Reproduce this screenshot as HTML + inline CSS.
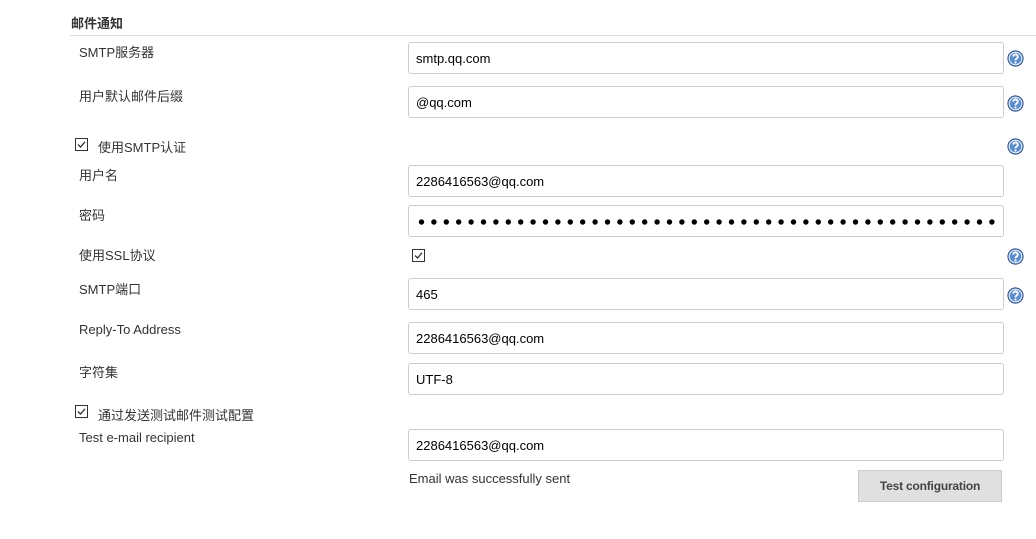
<!DOCTYPE html>
<html><head><meta charset="utf-8"><style>
body{margin:0;width:1036px;height:539px;background:#fff;position:relative;overflow:hidden;font-family:"Liberation Sans","Noto Sans CJK SC",sans-serif;font-size:13px;color:#333}
.a{position:absolute}
.lbl{position:absolute;left:79px;font-size:13px;color:#333}
.in{position:absolute;left:408px;width:596px;height:32px;border:1px solid #ccc;border-radius:3px;box-sizing:border-box;padding-left:7px;line-height:31px;font-size:13px;color:#000}
.h{position:absolute;left:1007px;width:17px;height:17px}
.cb{position:absolute;width:13px;height:13px}
</style></head><body>
<div class="a" style="left:71px;top:13px;font-weight:bold;font-size:13px;color:#333">邮件通知</div>
<div class="a" style="left:70px;top:35px;width:966px;height:1px;background:#ddd"></div>

<div class="lbl" style="top:42px">SMTP服务器</div>
<div class="in" style="top:42px">smtp.qq.com</div>
<div class="lbl" style="top:86px">用户默认邮件后缀</div>
<div class="in" style="top:86px">@qq.com</div>

<svg class="cb" style="left:75px;top:138px" viewBox="0 0 13 13"><use href="#c"/></svg>
<div class="lbl" style="left:98px;top:137px">使用SMTP认证</div>

<div class="lbl" style="top:165px">用户名</div>
<div class="in" style="top:165px">2286416563@qq.com</div>
<div class="lbl" style="top:205px">密码</div>
<div class="in" style="top:205px;padding:0">
<svg width="596" height="32" style="position:absolute;left:0;top:0"><g fill="#000" id="d"></g></svg></div>
<div class="lbl" style="top:245px">使用SSL协议</div>
<svg class="cb" style="left:412px;top:249px" viewBox="0 0 13 13"><use href="#c"/></svg>
<div class="lbl" style="top:279px">SMTP端口</div>
<div class="in" style="top:278px">465</div>
<div class="lbl" style="top:322px">Reply-To Address</div>
<div class="in" style="top:322px">2286416563@qq.com</div>
<div class="lbl" style="top:362px">字符集</div>
<div class="in" style="top:363px">UTF-8</div>

<svg class="cb" style="left:75px;top:405px" viewBox="0 0 13 13"><defs><g id="c"><rect x="0.5" y="0.5" width="12" height="12" fill="#fff" stroke="#333"/><path d="M3 6.5l2.5 2.5L10 3.8" fill="none" stroke="#333" stroke-width="1.3"/></g></defs><use href="#c"/></svg>
<div class="lbl" style="left:98px;top:405px">通过发送测试邮件测试配置</div>
<div class="lbl" style="top:430px">Test e-mail recipient</div>
<div class="in" style="top:429px">2286416563@qq.com</div>
<div class="a" style="left:409px;top:471px;color:#333">Email was successfully sent</div>
<div class="a" style="left:858px;top:470px;width:144px;height:32px;background:#e0e0e0;border:1px solid #ccc;box-sizing:border-box;text-align:center;line-height:30px;font-size:12px;font-weight:bold;color:#444;letter-spacing:-0.2px">Test configuration</div>

<svg class="h" style="top:50px" viewBox="0 0 16 16"><use href="#q"/></svg>
<svg class="h" style="top:95px" viewBox="0 0 16 16"><use href="#q"/></svg>
<svg class="h" style="top:138px" viewBox="0 0 16 16"><use href="#q"/></svg>
<svg class="h" style="top:248px" viewBox="0 0 16 16"><use href="#q"/></svg>
<svg class="h" style="top:287px" viewBox="0 0 16 16"><defs><g id="q"><circle cx="8" cy="8" r="7.6" fill="#1f4a85"/><circle cx="8" cy="8" r="6" fill="#5b8ccb" stroke="#dfe8f4" stroke-width="1.2"/><path d="M5.9 6.2a2.1 2.1 0 1 1 3.2 1.8c-.8.5-1.1.9-1.1 1.8" fill="none" stroke="#fff" stroke-width="1.7"/><circle cx="8" cy="11.8" r="1.05" fill="#fff"/></g></defs><use href="#q"/></svg>
<script>
var g=document.getElementById('d'),s='';for(var i=0;i<47;i++){s+='<circle cx="'+(12.5+i*12.4)+'" cy="16" r="2.7"/>';}g.innerHTML=s;
</script>
</body></html>
